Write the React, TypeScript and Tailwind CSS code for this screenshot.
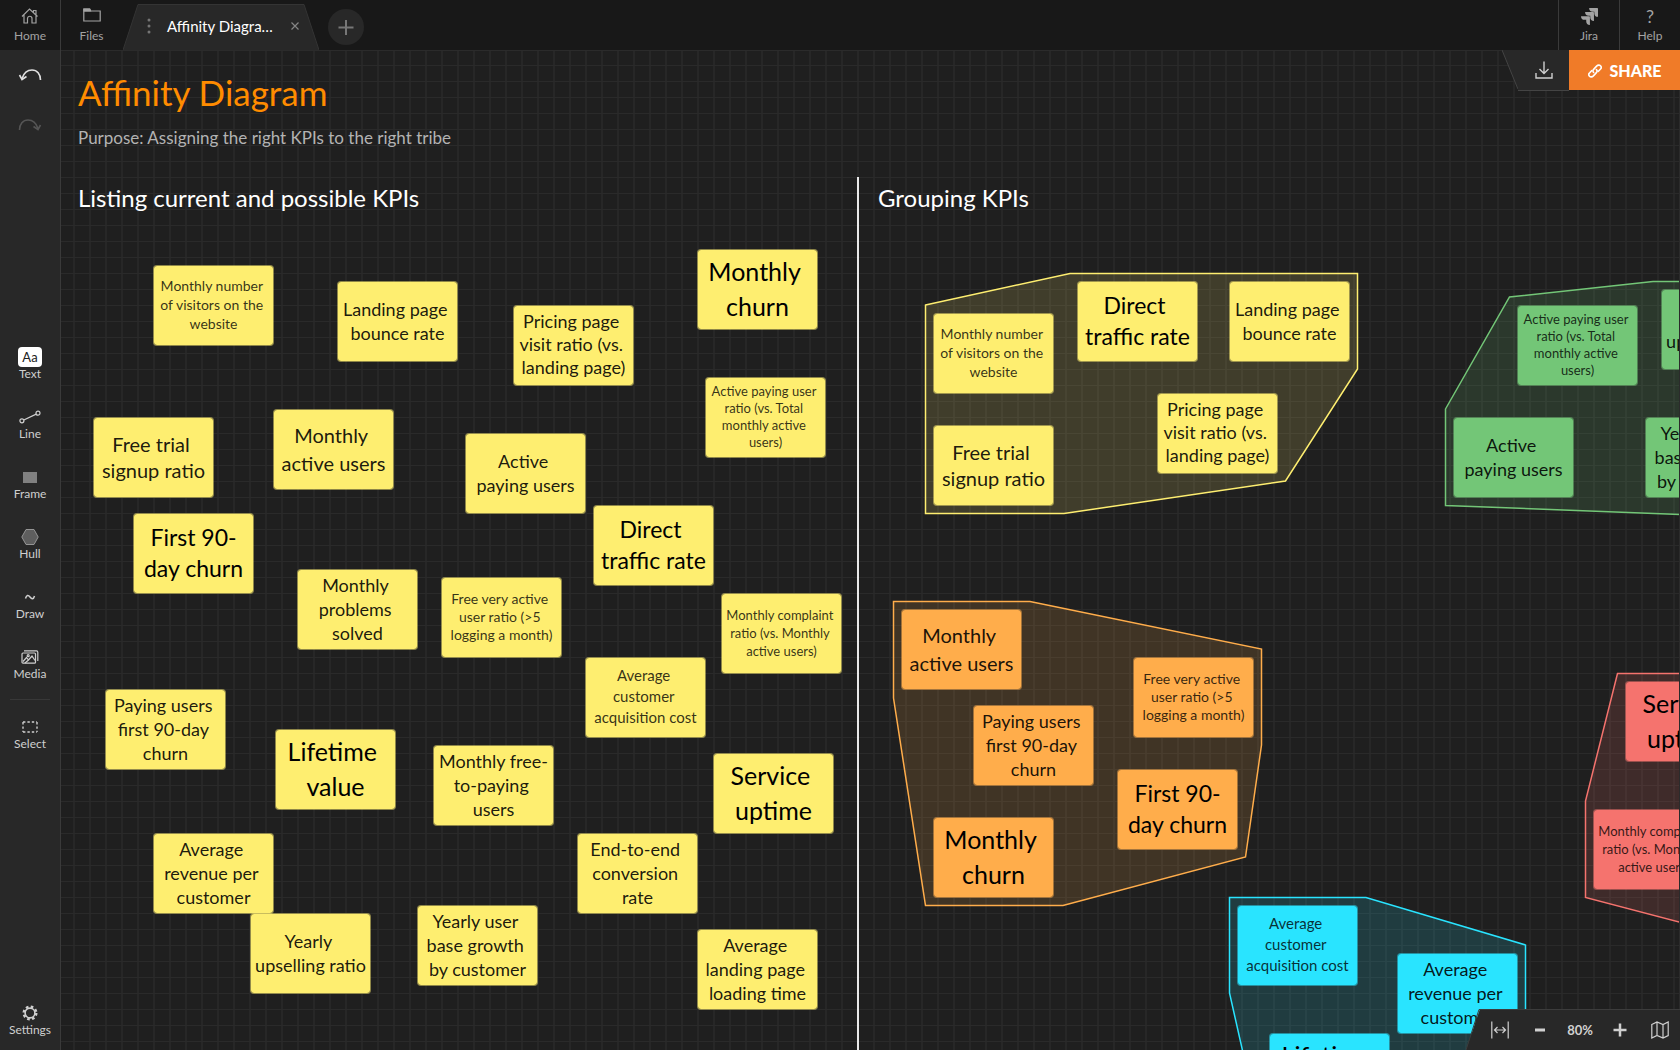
import React from "react";

type Tone = "yellow" | "orange" | "green" | "red" | "cyan";
type Size = "xs" | "sm" | "smd" | "base" | "md" | "mdl" | "lg" | "lgx" | "xl" | "xxl" | "sml";

const toneClass: Record<Tone, string> = {
  yellow: "bg-[#feee70] border-[#feee70]/50",
  orange: "bg-[#ffad4b] border-[#ffad4b]/50",
  green: "bg-[#73c677] border-[#73c677]/50",
  red: "bg-[#f5736e] border-[#f5736e]/50",
  cyan: "bg-[#29e4ff] border-[#29e4ff]/50",
};

const sizeClass: Record<Size, string> = {
  xs: "text-[13px] leading-[17px] text-black/80",
  sm: "text-[13px] leading-[18px] text-black/80",
  sml: "text-[14px] leading-[18px] text-black/80",
  smd: "text-[14px] leading-[19px] text-black/80",
  base: "text-[15px] leading-[21px] text-black/80",
  md: "text-[18px] leading-[23px] text-black/90",
  mdl: "text-[18px] leading-[24px] text-black/90",
  lg: "text-[20px] leading-[26px] text-black/90",
  lgx: "text-[20px] leading-[28px] text-black/90",
  xl: "text-[23px] leading-[31px] text-black",
  xxl: "text-[25px] leading-[35px] text-black",
};

/* Text and type size of every KPI, shared by the list and the groups. */
const kpis: Record<string, [string, Size]> = {
  visitors: ["Monthly number \nof visitors on the \nwebsite", "smd"],
  bounce: ["Landing page \nbounce rate", "mdl"],
  pricing: ["Pricing page \nvisit ratio (vs. \nlanding page)", "md"],
  churn: ["Monthly \nchurn", "xxl"],
  payingRatio: ["Active paying user \nratio (vs. Total \nmonthly active \nusers)", "xs"],
  trial: ["Free trial \nsignup ratio", "lg"],
  active: ["Monthly \nactive users", "lgx"],
  paying: ["Active \npaying users", "mdl"],
  direct: ["Direct \ntraffic rate", "xl"],
  first90: ["First 90-\nday churn", "xl"],
  problems: ["Monthly \nproblems \nsolved", "mdl"],
  veryActive: ["Free very active \nuser ratio (>5 \nlogging a month)", "sml"],
  complaint: ["Monthly complaint \nratio (vs. Monthly \nactive users)", "sm"],
  acquisition: ["Average \ncustomer \nacquisition cost", "base"],
  paying90: ["Paying users \nfirst 90-day \nchurn", "mdl"],
  lifetime: ["Lifetime \nvalue", "xxl"],
  freeToPaying: ["Monthly free-\nto-paying \nusers", "mdl"],
  uptime: ["Service \nuptime", "xxl"],
  revenue: ["Average \nrevenue per \ncustomer", "mdl"],
  conversion: ["End-to-end \nconversion \nrate", "mdl"],
  upselling: ["Yearly \nupselling ratio", "mdl"],
  growth: ["Yearly user \nbase growth \nby customer", "mdl"],
  loading: ["Average \nlanding page \nloading time", "mdl"],
};

/* [kpi, x, y] on the board, by colour. */
const notes: Record<Tone, [string, number, number][]> = {
  yellow: [
    ["visitors", 92, 215],
    ["bounce", 276, 231],
    ["pricing", 452, 255],
    ["churn", 636, 199],
    ["payingRatio", 644, 327],
    ["trial", 32, 367],
    ["active", 212, 359],
    ["paying", 404, 383],
    ["direct", 532, 455],
    ["first90", 72, 463],
    ["problems", 236, 519],
    ["veryActive", 380, 527],
    ["complaint", 660, 543],
    ["acquisition", 524, 607],
    ["paying90", 44, 639],
    ["lifetime", 214, 679],
    ["freeToPaying", 372, 695],
    ["uptime", 652, 703],
    ["revenue", 92, 783],
    ["conversion", 516, 783],
    ["upselling", 189, 863],
    ["growth", 356, 855],
    ["loading", 636, 879],
    ["visitors", 872, 263],
    ["direct", 1016, 231],
    ["bounce", 1168, 231],
    ["pricing", 1096, 343],
    ["trial", 872, 375],
  ],
  orange: [
    ["active", 840, 559],
    ["veryActive", 1072, 607],
    ["paying90", 912, 655],
    ["first90", 1056, 719],
    ["churn", 872, 767],
  ],
  green: [
    ["payingRatio", 1456, 255],
    ["upselling", 1600, 239],
    ["paying", 1392, 367],
    ["growth", 1584, 367],
  ],
  red: [
    ["uptime", 1564, 631],
    ["complaint", 1532, 759],
  ],
  cyan: [
    ["acquisition", 1176, 855],
    ["revenue", 1336, 903],
    ["lifetime", 1208, 983],
  ],
};

const hulls: [string, string][] = [
  ["#feee70", "864.5,255 1009,223.5 1296.5,223.5 1296.5,319 1224.5,431 1003,463.5 864.5,463.5"],
  ["#ffad4b", "832.5,551.5 969,551.5 1200.5,599 1200.5,695 1184.5,807 1002,855.5 864.5,855.5 832.5,648"],
  ["#73c677", "1384.5,359 1448.5,247 1592,231.5 1740,231.5 1740,469 1384.5,455.5"],
  ["#f5736e", "1556.5,623.5 1740,623.5 1740,904 1524.5,847.5 1524.5,751"],
  ["#29e4ff", "1168.5,847.5 1305,847.5 1464.5,895 1464.5,1100 1204,1100 1168.5,943"],
];

function Note({ kpi, tone, x, y }: { kpi: string; tone: Tone; x: number; y: number }) {
  const [text, size] = kpis[kpi];
  return (
    <div
      className={`absolute flex h-[81px] w-[121px] items-center justify-center whitespace-pre rounded-[4px] border bg-clip-padding pb-[2px] text-center ${toneClass[tone]} ${sizeClass[size]}`}
      style={{ left: x, top: y }}
    >
      <span>{text}</span>
    </div>
  );
}

function Board() {
  return (
    <main className="relative min-w-0 flex-1 overflow-hidden bg-[#1f1f1f] bg-[linear-gradient(to_bottom,#2a2a2a_1px,transparent_1px),linear-gradient(to_right,#272727_2px,transparent_2px)] bg-[size:16px_16px] bg-[position:12px_15px]">
      <svg className="absolute inset-0 h-full w-full" aria-hidden="true">
        {hulls.map(([color, points]) => (
          <polygon key={color} points={points} fill={color} fillOpacity="0.15" stroke={color} strokeWidth="1.5" />
        ))}
      </svg>
      <h1 className="absolute left-[17px] top-[20px] whitespace-nowrap text-[35px] leading-[44px] text-[#ff8c00]">
        Affinity Diagram
      </h1>
      <p className="absolute left-[17px] top-[76px] whitespace-nowrap text-[17px] leading-[24px] text-[#b3b3b3]">
        Purpose: Assigning the right KPIs to the right tribe
      </p>
      <h2 className="absolute left-[17px] top-[132px] whitespace-nowrap text-[24px] leading-[32px] text-white">
        Listing current and possible KPIs
      </h2>
      <h2 className="absolute left-[817px] top-[132px] whitespace-nowrap text-[24px] leading-[32px] text-white">
        Grouping KPIs
      </h2>
      <div className="absolute bottom-0 left-[796px] top-[127px] w-[2px] bg-white/90" />
      {(Object.keys(notes) as Tone[]).map((tone) =>
        notes[tone].map(([kpi, x, y]) => <Note key={`${tone}${x}-${y}`} kpi={kpi} tone={tone} x={x} y={y} />),
      )}
      <div className="pointer-events-none absolute inset-0 border-r border-t border-[#2b2b2b]" />
      <ShareBar />
      <ZoomBar />
    </main>
  );
}

function ShareBar() {
  return (
    <div className="absolute right-0 top-0 flex h-10">
      <svg width="17" height="41" viewBox="0 0 17 41" className="-mr-px">
        <path d="M0 0 L15.5 38 Q16 40 17 40 V0 Z" fill="#282828" />
        <path d="M0 0 L15.5 38 Q16.500 40.500 18 40.500" fill="none" stroke="#444" />
      </svg>
      <button aria-label="Download" className="flex h-[41px] w-[51px] items-center justify-center border-b border-[#444] bg-[#282828]">
        <svg width="18" height="18" viewBox="0 0 18 18" fill="none" stroke="#cfcfcf" strokeWidth="1.4">
          <path d="M1 12v5h16v-5M9 0.500v12M4.500 8 9 12.500 13.500 8" />
        </svg>
      </button>
      <button className="flex w-[111px] items-center justify-center gap-2 bg-[#f07b28] pt-[2px] text-[16px] leading-5 font-black text-white">
        <svg width="14" height="14" viewBox="0 0 14 14" fill="none" stroke="#fff" strokeWidth="1.6" strokeLinecap="round">
          <path d="M5.600 8.400 C4.600 7.400 4.800 6.200 5.600 5.400 L8.600 2.100 C10 .700 11.600 .900 12.500 1.800 C13.400 2.700 13.400 4.200 12.300 5.300 L10.400 7.300" />
          <path d="M8.400 5.600 C9.400 6.600 9.200 7.800 8.400 8.600 L5.400 11.900 C4 13.300 2.400 13.100 1.500 12.200 C.600 11.300 .600 9.800 1.700 8.700 L3.600 6.700" />
        </svg>
        <span>SHARE</span>
      </button>
    </div>
  );
}

function ZoomBar() {
  return (
    <div className="absolute right-0 bottom-0 flex h-[41px] text-[#d0d0d0]">
      <svg width="14" height="41" viewBox="0 0 14 41">
        <path d="M14 0 L0 41 H14 Z" fill="#282828" />
        <path d="M14 0.500 H13 L0 41" fill="none" stroke="#3c3c3c" />
      </svg>
      <div className="flex items-center border-t border-[#3c3c3c] bg-[#282828]">
        <button aria-label="Fit to width" className="flex h-10 w-10 items-center justify-center">
          <svg width="18" height="18" viewBox="0 0 18 18" fill="none" stroke="currentColor" strokeWidth="1.200">
            <path d="M.800 0.500v17M17.200 0.500v17M3.500 9h11M6.500 6l-3 3 3 3M11.500 6l3 3-3 3" />
          </svg>
        </button>
        <button aria-label="Zoom out" className="flex h-10 w-10 items-center justify-center">
          <svg width="14" height="14" viewBox="0 0 14 14" stroke="currentColor" strokeWidth="3">
            <path d="M2 7h10" />
          </svg>
        </button>
        <button className="w-10 text-center text-[13px] leading-4 font-bold">80%</button>
        <button aria-label="Zoom in" className="flex h-10 w-10 items-center justify-center">
          <svg width="14" height="14" viewBox="0 0 14 14" stroke="currentColor" strokeWidth="2.500">
            <path d="M.500 7h13M7 .500v13" />
          </svg>
        </button>
        <button aria-label="Map" className="flex h-10 w-10 items-center justify-center">
          <svg width="18" height="18" viewBox="0 0 18 18" fill="none" stroke="currentColor" strokeWidth="1.200">
            <path d="M.800 3.500 6 1l6 2.500L17.200 1v13.500L12 17l-6-2.500L.800 17ZM6 1v13.500M12 3.500V17" />
          </svg>
        </button>
      </div>
    </div>
  );
}

const icons = {
  home: (
    <svg width="18" height="16" viewBox="0 0 18 16" fill="none" stroke="currentColor" strokeWidth="1.200">
      <path d="M1 8.500 8.500 1 16.500 8.500M3 7v8h3.500v-4.500a2.200 2.200 0 0 1 4.500 0V15H15V2.500h-2.500v2" />
    </svg>
  ),
  files: (
    <svg width="18" height="14" viewBox="0 0 18 14" fill="none" stroke="currentColor" strokeWidth="1.200">
      <path d="M.800 13V1h6l1 2h9.400v10ZM.800 3h8" />
      <path d="M1 1h5.500l1 2H1Z" fill="currentColor" />
    </svg>
  ),
  jira: (
    <svg width="17" height="17" viewBox="0 0 24 24" fill="currentColor">
      <path d="M11.571 11.513H0a5.218 5.218 0 0 0 5.232 5.215h2.130v2.057A5.215 5.215 0 0 0 12.575 24V12.518a1.005 1.005 0 0 0-1.005-1.005zm5.723-5.756H5.736a5.215 5.215 0 0 0 5.215 5.214h2.129v2.058a5.218 5.218 0 0 0 5.215 5.214V6.758a1.001 1.001 0 0 0-1.001-1.001zM23.013 0H11.455a5.215 5.215 0 0 0 5.215 5.215h2.129v2.057A5.215 5.215 0 0 0 24 12.483V1.005A1.005 1.005 0 0 0 23.013 0Z" />
    </svg>
  ),
  help: <span className="text-[18px] leading-4">?</span>,
  text: (
    <span className="flex h-5 w-6 items-center justify-center rounded-[4px] bg-white text-[13px] leading-4 text-[#222]">Aa</span>
  ),
  line: (
    <svg width="22" height="14" viewBox="0 0 22 14" fill="none" stroke="currentColor" strokeWidth="1.200">
      <circle cx="2.900" cy="10.800" r="2" />
      <circle cx="19" cy="3.200" r="2" />
      <path d="M4.800 10 17.200 4.100" />
    </svg>
  ),
  frame: <span className="h-[11px] w-[14px] bg-[#808080]" />,
  hull: (
    <svg width="18" height="16" viewBox="0 0 18 16" fill="#5e5e5e" stroke="#959595">
      <path d="M5 .500h8L17.200 8 13 15.500H5L.800 8Z" />
    </svg>
  ),
  draw: (
    <svg width="12" height="8" viewBox="0 0 12 8" fill="none" stroke="currentColor" strokeWidth="1.500">
      <path d="M1.500 5.500C2.500 2 4.200 1.500 6 4s3.500 2.500 4.500-1" />
    </svg>
  ),
  media: (
    <svg width="18" height="14" viewBox="0 0 18 14" fill="none" stroke="currentColor" strokeWidth="1.200">
      <rect x="1" y="3" width="13.500" height="10.200" rx="1" />
      <path d="M3 .900h12.500a1.300 1.300 0 0 1 1.300 1.300V11M2 11.500 5.500 7.500l2 2.500 3.500-4 3 4.500M4 13l3.500-3" />
      <circle cx="7.200" cy="5.700" r="1" />
    </svg>
  ),
  select: (
    <svg width="16" height="12" viewBox="0 0 16 12" fill="none" stroke="currentColor" strokeWidth="1.400" strokeDasharray="2.400 2">
      <path d="M1 1h14M1 11h14M1 1v10M15 1v10" />
    </svg>
  ),
  settings: (
    <svg width="16" height="16" viewBox="0 0 16 16" fill="none" stroke="currentColor">
      <circle cx="8" cy="8" r="6.300" strokeWidth="2.400" strokeDasharray="2.600 2.348" />
      <circle cx="8" cy="8" r="4.900" strokeWidth="1.600" />
    </svg>
  ),
};

function ToolButton({ icon, label }: { icon: React.ReactNode; label: string }) {
  return (
    <button className="flex h-[60px] w-full shrink-0 flex-col items-center justify-center text-[12px] leading-[14px] text-[#cfcfcf]">
      <span className="flex h-5 items-center justify-center">{icon}</span>
      {label}
    </button>
  );
}

function BarButton({ icon, label, className = "" }: { icon: React.ReactNode; label: string; className?: string }) {
  return (
    <button
      className={`flex h-[50px] w-[61px] shrink-0 flex-col items-center gap-px border-[#3a3a3a] pt-2 text-[12px] leading-[14px] text-[#a3a3a3] ${className}`}
    >
      <span className="flex h-5 items-start justify-center">{icon}</span>
      {label}
    </button>
  );
}

function TopBar() {
  return (
    <header className="flex h-[50px] shrink-0 bg-[#181818]">
      <BarButton icon={icons.home} label="Home" className="border-r" />
      <BarButton icon={icons.files} label="Files" />
      <div className="relative ml-px flex h-[50px] w-[196px] items-center pl-6 pr-[18px] pt-[2px]">
        <svg width="196" height="50" viewBox="0 0 196 50" className="absolute inset-0" aria-hidden="true">
          <path d="M0 50 15 4.500H181L196 50" fill="#282828" stroke="#343434" />
        </svg>
        <svg width="4" height="16" viewBox="0 0 4 16" fill="#757575" className="relative" aria-hidden="true">
          <circle cx="2" cy="2" r="1.500" />
          <circle cx="2" cy="8" r="1.500" />
          <circle cx="2" cy="14" r="1.500" />
        </svg>
        <button className="relative ml-4 whitespace-nowrap text-[15px] leading-5 text-white">Affinity Diagra…</button>
        <button aria-label="Close tab" className="relative ml-auto p-[2px]">
          <svg width="8" height="8" viewBox="0 0 8 8" stroke="#858585" strokeWidth="1.200">
            <path d="M.500 .500l7 7M7.500 .500l-7 7" />
          </svg>
        </button>
      </div>
      <button aria-label="New tab" className="ml-[9px] mt-[9px] flex h-9 w-9 items-center justify-center rounded-full bg-[#282828]">
        <svg width="16" height="16" viewBox="0 0 16 16" stroke="#777" strokeWidth="2">
          <path d="M.500 8.500h15M8 1v15" />
        </svg>
      </button>
      <div className="ml-auto flex">
        <BarButton icon={icons.jira} label="Jira" className="border-l" />
        <BarButton icon={icons.help} label="Help" className="border-l" />
      </div>
    </header>
  );
}

function SideBar() {
  return (
    <aside className="flex w-[61px] shrink-0 flex-col border-r border-[#3a3a3a] bg-[#282828]">
      <button aria-label="Undo" className="flex h-[50px] items-center justify-center text-[#e0e0e0]">
        <svg width="24" height="14" viewBox="0 0 24 14" fill="none" stroke="currentColor" strokeWidth="1.600">
          <path d="M4 10.500C6 4.500 10 2 14 2c5 0 8.500 4 8.500 10" />
          <path d="M1.500 7 4 11.500 8.500 8.500" />
        </svg>
      </button>
      <button aria-label="Redo" disabled className="flex h-[50px] items-center justify-center text-[#555]">
        <svg width="24" height="14" viewBox="0 0 24 14" fill="none" stroke="currentColor" strokeWidth="1.600">
          <path d="M20 10.500C18 4.500 14 2 10 2 5 2 1.500 6 1.500 12" />
          <path d="M22.500 7 20 11.500 15.500 8.500" />
        </svg>
      </button>
      <nav className="mt-[184px] flex flex-col">
        <ToolButton icon={icons.text} label="Text" />
        <ToolButton icon={icons.line} label="Line" />
        <ToolButton icon={icons.frame} label="Frame" />
        <ToolButton icon={icons.hull} label="Hull" />
        <ToolButton icon={icons.draw} label="Draw" />
        <ToolButton icon={icons.media} label="Media" />
        <hr className="mx-[10px] mb-1 mt-[5px] border-[#383838]" />
        <ToolButton icon={icons.select} label="Select" />
      </nav>
      <div className="mt-auto">
        <ToolButton icon={icons.settings} label="Settings" />
      </div>
    </aside>
  );
}

export default function App() {
  return (
    <div className="flex h-screen flex-col overflow-hidden bg-[#181818] font-['Lato',sans-serif]">
      <TopBar />
      <div className="flex min-h-0 flex-1">
        <SideBar />
        <Board />
      </div>
    </div>
  );
}
